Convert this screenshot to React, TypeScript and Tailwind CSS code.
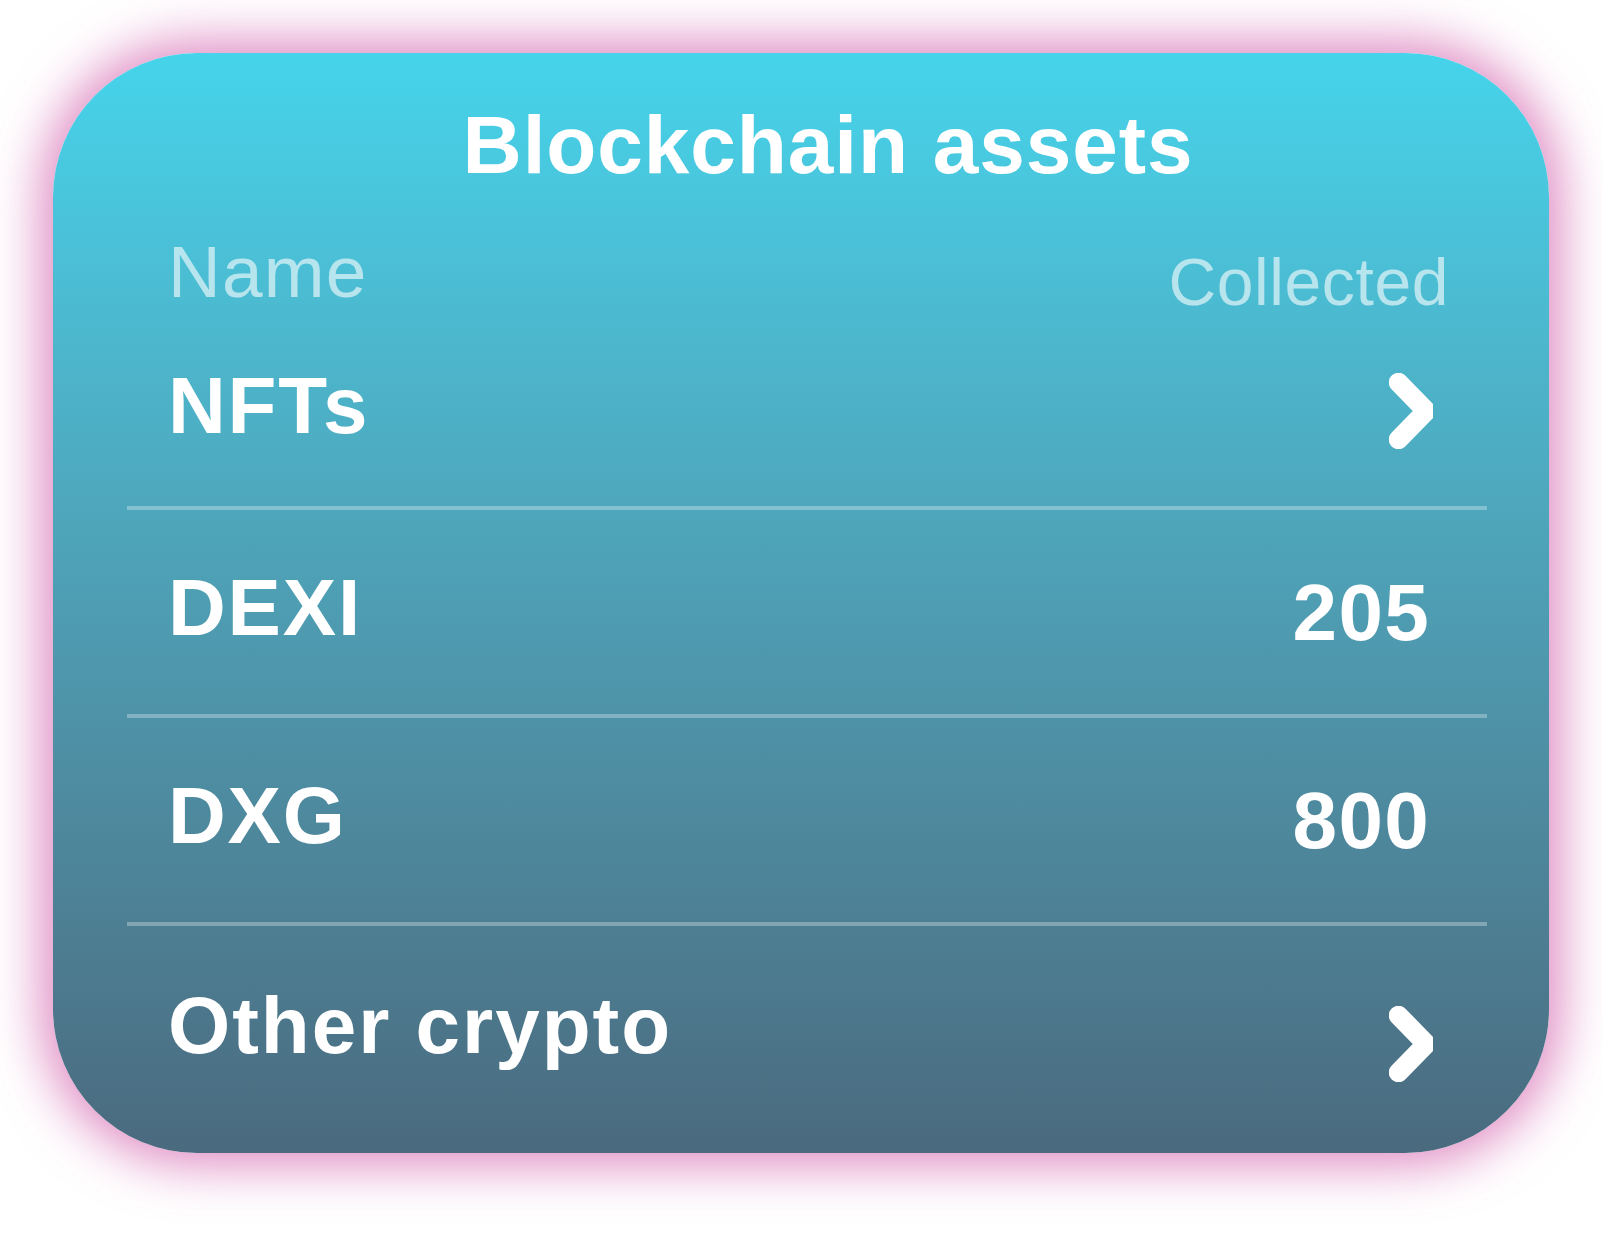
import type { ReactNode } from "react";

interface AssetRow {
  name: string;
  value?: string;
  link?: boolean;
}

const rows: AssetRow[] = [
  { name: "NFTs", link: true },
  { name: "DEXI", value: "205" },
  { name: "DXG", value: "800" },
  { name: "Other crypto", link: true },
];

function Chevron() {
  return (
    <svg width="44" height="76" viewBox="0 0 44 76" fill="none" className="shrink-0">
      <polyline
        points="9.5,9.5 37.3,38 9.5,66.5"
        stroke="white"
        strokeWidth="19.5"
        strokeLinecap="round"
        strokeLinejoin="bevel"
      />
    </svg>
  );
}

function Divider() {
  return <div className="ml-[74px] mr-[62px] h-[4px] bg-white/30" />;
}

function Row({ className, children }: { className: string; children: ReactNode }) {
  return (
    <div className={`flex items-start justify-between pl-[115px] pr-[116px] ${className}`}>
      {children}
    </div>
  );
}

export default function App() {
  return (
    <div className="min-h-screen bg-white p-[53px] font-['Liberation_Sans',Arial,sans-serif]">
      <div className="flex h-[1100px] w-[1496px] flex-col overflow-hidden rounded-[144px] bg-gradient-to-b from-[#45d4eb] to-[#4a6a7e] pt-[51px] text-white shadow-[0_0_50px_12px_rgba(215,110,180,0.8)]">
        <h1 className="pl-[54px] text-center text-[82px] font-bold leading-none tracking-[0.9px]">
          Blockchain assets
        </h1>

        <div className="mt-[49px] flex h-[80px] items-start justify-between pl-[115px] pr-[100px] text-white/60">
          <span className="text-[73px] leading-none tracking-[1.2px]">Name</span>
          <span className="mt-[14px] text-[66px] leading-none tracking-[0.6px]">Collected</span>
        </div>

        <Row className="h-[191px] pt-[51px]">
          <span className="text-[80px] font-bold leading-none tracking-[1.8px]">{rows[0].name}</span>
          <div className="mt-[7px]">
            <Chevron />
          </div>
        </Row>
        <Divider />

        {rows.slice(1, 3).map((r) => (
          <div key={r.name}>
            <Row className="h-[204px] pt-[58px]">
              <span className="text-[80px] font-bold leading-none tracking-[1.8px]">{r.name}</span>
              <span className="mr-[3px] mt-[5px] text-[80px] font-bold leading-none tracking-[1.3px]">
                {r.value}
              </span>
            </Row>
            <Divider />
          </div>
        ))}

        <Row className="pt-[60px]">
          <span className="text-[80px] font-bold leading-none tracking-[2px]">{rows[3].name}</span>
          <div className="mt-[20px]">
            <Chevron />
          </div>
        </Row>
      </div>
    </div>
  );
}
